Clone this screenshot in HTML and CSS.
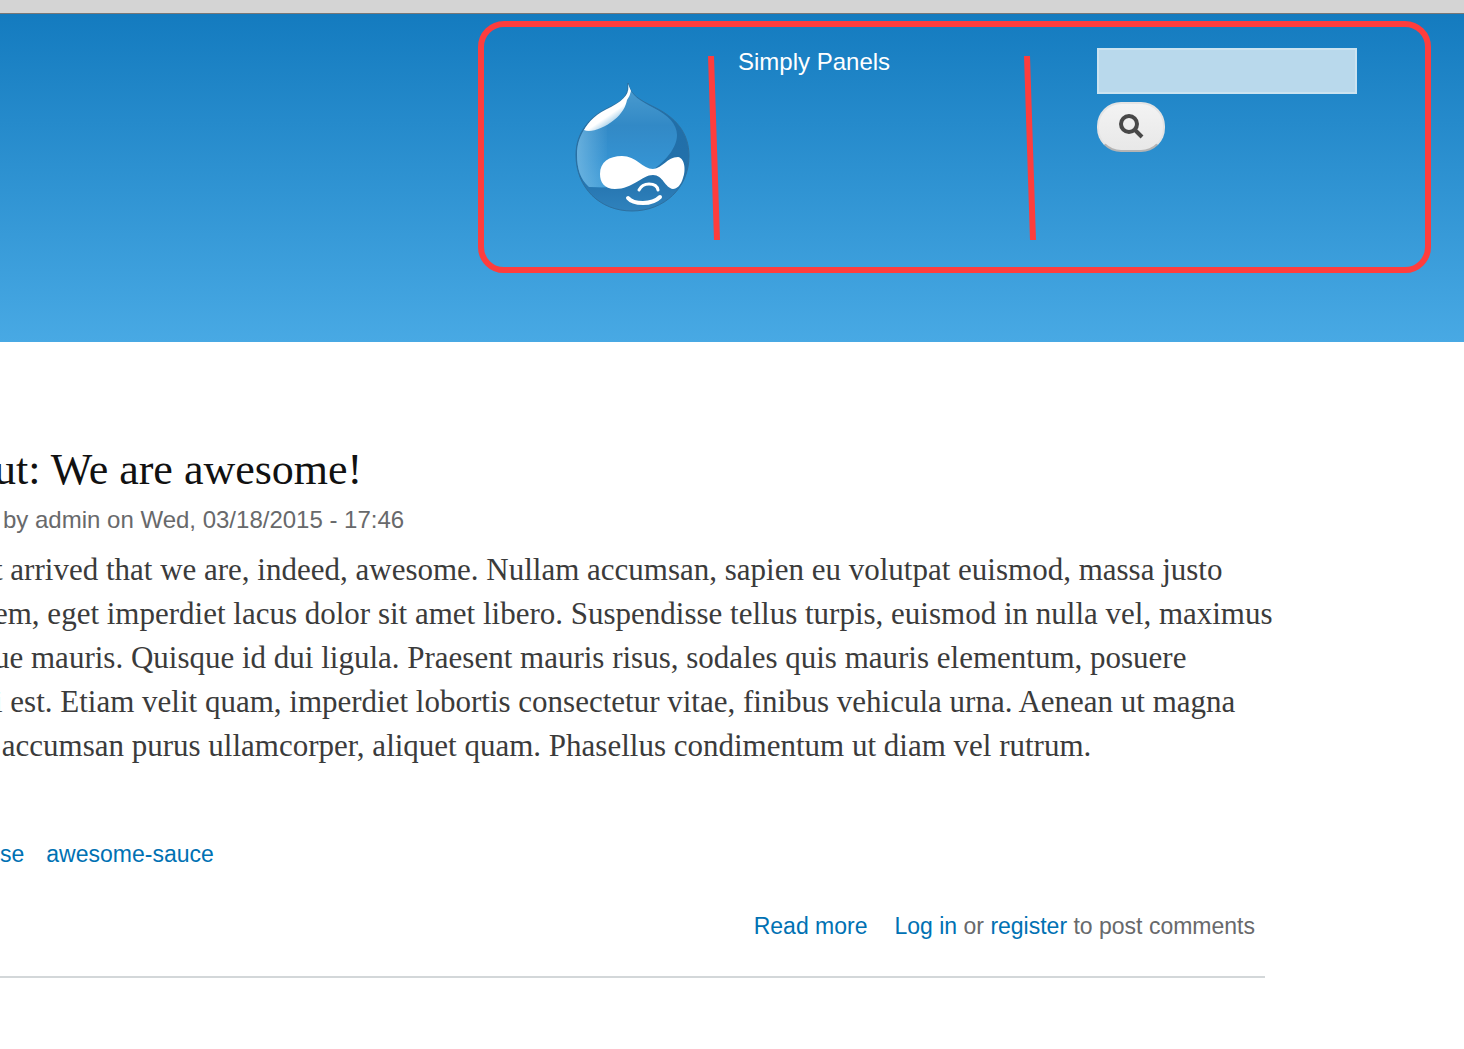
FILE: index.html
```html
<!DOCTYPE html>
<html lang="en">
<head>
<meta charset="utf-8">
<title>Simply Panels</title>
<link rel="stylesheet" href="styles.css">
</head>
<body>
<div class="toolbar"></div>
<header class="header">
  <div class="panel-frame">
    <a class="logo" href="#" aria-label="Home">
      <svg width="116" height="132" viewBox="0 0 116 132">
        <defs>
          <linearGradient id="drop" x1="0" y1="0" x2="0" y2="1">
            <stop offset="0" stop-color="#4d9dd0"/><stop offset=".4" stop-color="#3289c6"/><stop offset=".75" stop-color="#3593d2"/><stop offset="1" stop-color="#429ed8"/>
          </linearGradient>
          <linearGradient id="edge" x1="0" y1="0" x2="1" y2="0">
            <stop offset="0" stop-color="#7dbde4" stop-opacity=".7"/><stop offset="1" stop-color="#7dbde4" stop-opacity="0"/>
          </linearGradient>
          <linearGradient id="base" x1="0" y1="0" x2="0" y2="1">
            <stop offset="0" stop-color="#1f6ca6"/><stop offset=".7" stop-color="#2371ab"/><stop offset="1" stop-color="#2f82bd"/>
          </linearGradient>
          <linearGradient id="shine" gradientUnits="userSpaceOnUse" x1="26" y1="28" x2="37" y2="44">
            <stop offset=".45" stop-color="#fff"/><stop offset="1" stop-color="#8fc3e4"/>
          </linearGradient>
        </defs>
        <path d="M53 1C55 13 65 18 79 25C100 35 114 50 114 74C114 106 89 129 57 129C25 129 1 106 1 73C1 51 14 35 33 26C45 20 54 16 53 1Z" fill="url(#base)" stroke="#2d6f9f" stroke-width="1"/>
        <path d="M53 2C56 14 66 19 79 26C93 33 102 42 102 53C102 68 86 84 70 93C54 103 42 107 14 105C5 97 2 86 2 73C2 51 15 36 34 27C46 21 54 17 53 2Z" fill="url(#drop)"/>
        <path d="M34 27C15 36 2 51 2 73C2 86 5 97 14 105L32 105V30Z" fill="url(#edge)"/>
        <path d="M53 2C55 10 51 17 36 25C22 31 13 40 9 48C15 51 28 47 39 38C47 32 51 24 52 18Q55 14 56 9Z" fill="url(#shine)"/>
        <path d="M25 92C25 80 34 74 47 74C61 74 68 87 78 87C88 86 92 75 103 75C110 76 111 89 108 96C106 103 102 107 98 107C90 106 88 93 78 93C67 93 58 107 40 107C29 107 25 100 25 92Z" fill="#fff"/>
        <path d="M64 108Q67 102 74 102Q82 102 83 108" fill="none" stroke="#fff" stroke-width="3" stroke-linecap="round"/>
        <path d="M53 116Q57 121 68 121Q79 121 85 115" fill="none" stroke="#fff" stroke-width="4" stroke-linecap="round"/>
      </svg>
    </a>
    <svg class="divider" width="12" height="184" viewBox="0 0 12 184"><path d="M3 0L9 184" stroke="#fe3d3d" stroke-width="6"/></svg>
    <a class="site-name" href="#">Simply Panels</a>
    <svg class="divider" width="12" height="184" viewBox="0 0 12 184"><path d="M3 0L9 184" stroke="#fe3d3d" stroke-width="6"/></svg>
    <form class="search">
      <input class="search-input" type="text" aria-label="Search">
      <button class="search-button" type="button" aria-label="Search">
        <svg width="26" height="26" viewBox="0 0 26 26" fill="none" stroke="#484848"><circle cx="11" cy="10" r="8" stroke-width="4"/><path d="M17 16L24 23" stroke-width="4"/></svg>
      </button>
    </form>
  </div>
</header>
<main class="content">
  <article class="post">
    <h2 class="post-title">ut: We are awesome!</h2>
    <p class="meta">by admin on Wed, 03/18/2015 - 17:46</p>
    <p class="post-body">t arrived that we are, indeed, awesome. Nullam accumsan, sapien eu volutpat euismod, massa justo<br>
em, eget imperdiet lacus dolor sit amet libero. Suspendisse tellus turpis, euismod in nulla vel, maximus<br>
ue mauris. Quisque id dui ligula. Praesent mauris risus, sodales quis mauris elementum, posuere<br>
i est. Etiam velit quam, imperdiet lobortis consectetur vitae, finibus vehicula urna. Aenean ut magna<br>
&nbsp;accumsan purus ullamcorper, aliquet quam. Phasellus condimentum ut diam vel rutrum.</p>
    <div class="tags"><a href="#">se</a><a href="#">awesome-sauce</a></div>
    <div class="links"><a href="#">Read more</a><span><a href="#">Log in</a> or <a href="#">register</a> to post comments</span></div>
  </article>
</main>
</body>
</html>
```
FILE: styles.css
```css
* { box-sizing: border-box; }
body {
  margin: 0;
  background: #fff;
  color: #3b3b3b;
  font-family: "Liberation Sans", Arial, sans-serif;
  font-size: 24px;
  line-height: 28px;
  overflow-x: hidden;
}
a { color: #0071b3; text-decoration: none; }
.toolbar {
  height: 14px;
  background: #d4d4d4;
  border-bottom: 1px solid #777;
}
.header {
  padding: 7px 33px 69px;
  background: linear-gradient(#147bbf, #48a9e4);
}
.panel-frame {
  display: grid;
  grid-template-columns: 224px 12px 304px 12px 1fr;
  width: 68%;
  min-width: 953px;
  height: 252px;
  margin-left: auto;
  border: 6px solid #fe3d3d;
  border-radius: 26px;
}
.logo { padding: 55px 0 0 91px; }
.divider { display: block; margin-top: 29px; }
.site-name {
  padding: 21px 18px;
  color: #fff;
  white-space: nowrap;
}
.search {
  display: flex;
  flex-direction: column;
  align-items: flex-start;
  gap: 8px;
  padding: 21px 0 0 61px;
}
.search-input {
  width: 260px;
  height: 46px;
  padding: 4px 8px;
  border: 2px solid #cce3f0;
  background: #b9d9ec;
  font: inherit;
}
.search-button {
  display: flex;
  align-items: center;
  justify-content: center;
  width: 68px;
  height: 50px;
  padding: 0;
  border: 2px solid #e4e4e4;
  border-bottom-color: #b4b4b4;
  border-radius: 24px;
  background: linear-gradient(#f3f3f3, #e8e8e8);
}
.content { padding: 102px 199px 0 0; }
.post { border-bottom: 2px solid #d3d7d9; padding-bottom: 36px; }
.post-title, .post-body {
  margin: 0 0 0 -6px;
  font-family: "Liberation Serif", Georgia, serif;
  white-space: nowrap;
}
.post-title {
  color: #111;
  font-size: 44px;
  font-weight: 400;
  line-height: 52px;
}
.meta {
  margin: 10px 0 14px;
  padding-left: 3px;
  color: #68696b;
}
.post-body { font-size: 31px; line-height: 44px; }
.tags, .links { display: flex; font-size: 23px; }
.tags { gap: 22px; margin-top: 72px; }
.links {
  justify-content: flex-end;
  gap: 27px;
  margin-top: 44px;
  padding-right: 10px;
  color: #68696b;
}
```
